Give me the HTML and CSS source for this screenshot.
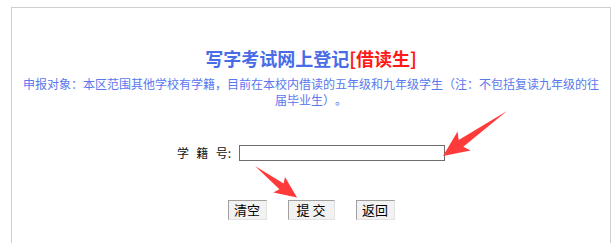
FILE: index.html
```html
<!DOCTYPE html>
<html lang="zh-CN">
<head>
<meta charset="utf-8">
<title>写字考试网上登记</title>
<link rel="stylesheet" href="styles.css">
</head>
<body>
<div class="box">
  <h1 class="title">写字考试网上登记<span class="tag">[借读生]</span></h1>
  <p class="desc">申报对象：本区范围其他学校有学籍，目前在本校内借读的五年级和九年级学生（注：不包括复读九年级的往届毕业生）。</p>
  <div class="field">
    <label class="label" for="xjh">学&nbsp;&nbsp;籍&nbsp;&nbsp;号:</label>
    <input class="input" id="xjh" type="text">
  </div>
  <div class="actions">
    <button class="btn" type="button">清空</button>
    <button class="btn btn-wide" type="button">提 交</button>
    <button class="btn" type="button">返回</button>
  </div>
</div>
<svg class="marks" width="613" height="243" viewBox="0 0 613 243" aria-hidden="true">
  <polygon fill="#ff3a3a" points="507,111 463.3,146.7 470.6,150.6 443,156 457.6,131.6 458.7,140.1"/>
  <polygon fill="#ff3a3a" points="255,166 283.6,183.6 285,177 297,197.5 273.4,192.4 279.4,189.2"/>
</svg>
</body>
</html>
```
FILE: styles.css
```css
html, body {
  margin: 0;
  padding: 0;
  background: #fff;
}
body {
  padding: 7px 0 0 11px;
  position: relative;
  height: 243px;
  box-sizing: border-box;
  overflow: hidden;
  font-family: "Noto Sans CJK SC", "Noto Sans", sans-serif;
  text-spacing-trim: space-all;
}
.box {
  width: 600px;
  height: 236px;
  border: 1px solid #cfcfcf;
  border-bottom: none;
  padding: 38px 8px 0;
  box-sizing: border-box;
  text-align: center;
}
.title {
  margin: 0;
  font-size: 18px;
  line-height: 24px;
  font-weight: bold;
  color: #4a6be8;
}
.tag {
  color: #ff1a1a;
}
.desc {
  margin: 6px 0 0;
  font-size: 12px;
  line-height: 16px;
  color: #5a78ee;
}
.field {
  margin-top: 37px;
  display: flex;
  justify-content: center;
  align-items: center;
  gap: 8px;
  height: 16px;
}
.label {
  font-size: 12px;
  line-height: 16px;
  color: #111;
  word-spacing: 1px;
}
.input {
  width: 206px;
  height: 16px;
  box-sizing: border-box;
  border: 1px solid #6e6e6e;
  margin: 0;
  padding: 0 2px;
  background: #fff;
}
.actions {
  margin-top: 39px;
  display: flex;
  justify-content: center;
  gap: 21px;
}
.btn {
  width: 39px;
  height: 20px;
  box-sizing: border-box;
  margin: 0;
  padding: 0;
  font-family: "Noto Sans CJK SC", sans-serif;
  font-size: 13px;
  line-height: 18px;
  color: #000;
  background: #f2f2f2;
  border: 1px solid;
  border-color: #a0a0a0 #e2e2e2 #e2e2e2 #a0a0a0;
  border-radius: 0;
}
.btn-wide {
  width: 47px;
}
.marks {
  position: absolute;
  left: 0;
  top: 0;
  pointer-events: none;
}
```
